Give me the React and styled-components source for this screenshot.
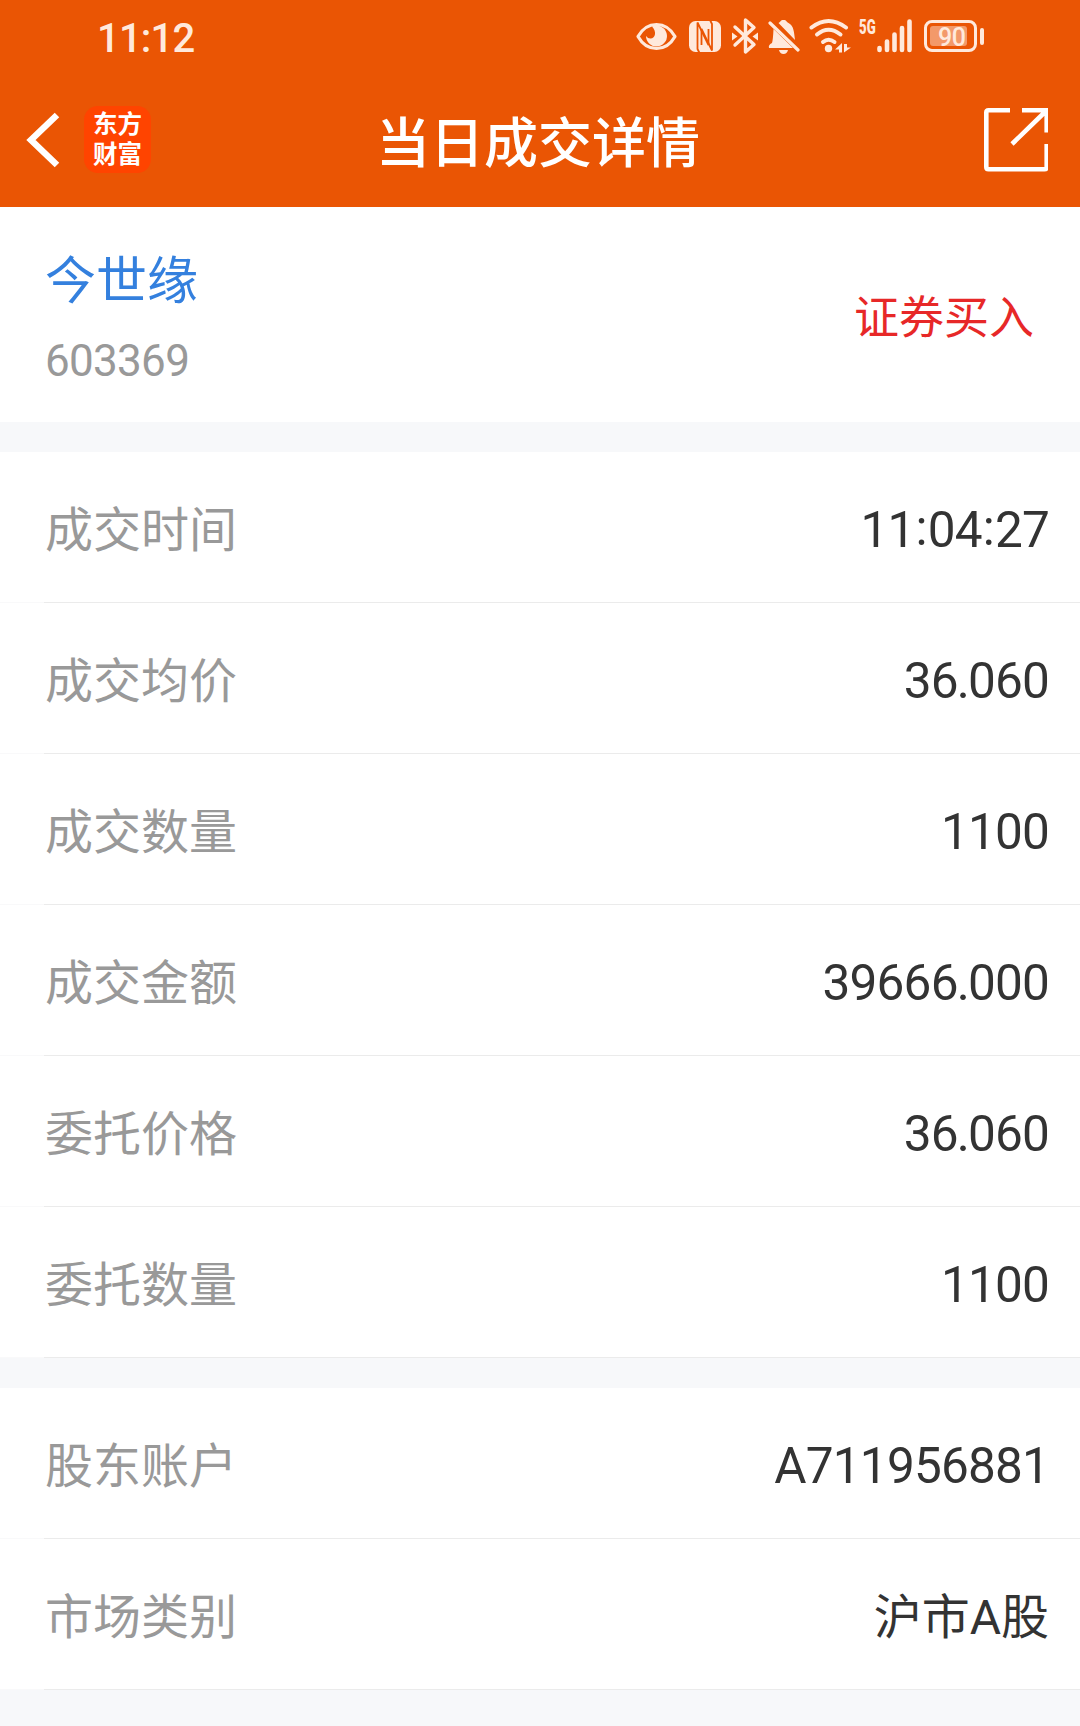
import React from 'react';
import styled, { createGlobalStyle } from 'styled-components';

const GlobalStyle = createGlobalStyle`
	body {
		margin: 0;
		background-color: #f7f8fa;
		font-family: "Noto Sans CJK SC", "Noto Sans", sans-serif;
	}
`;

const Page = styled.div`
	width: 1080px;
	min-height: 1726px;
	background-color: #f7f8fa;
	overflow: hidden;
`;

const Header = styled.header`
	height: 207px;
	background-color: #ea5504;
	color: #fff;
`;

const StatusBar = styled.div`
	display: flex;
	justify-content: space-between;
	height: 72px;
	padding: 0 96px 0 97px;
	color: #ffe9dc;
`;

const Clock = styled.span`
	padding-top: 3px;
	font: 500 40px/72px Roboto, sans-serif;
	letter-spacing: -0.8px;
`;

const StatusIcons = styled.div`
	display: flex;
	align-items: center;
`;

const Glyph = styled.svg`
	display: block;
	flex: none;
	width: ${props => props.$w}px;
	height: ${props => props.$h || 40}px;
	margin-left: ${props => props.$gap || 0}px;
	fill: ${props => props.$line ? 'none' : 'currentColor'};
	stroke: ${props => props.$line ? 'currentColor' : 'none'};
`;

const Network = styled.span`
	align-self: flex-start;
	width: 17px;
	margin: 17px 0 0 8px;
	font: 900 20px/20px Roboto, sans-serif;
	transform: scaleX(0.66);
	transform-origin: left;
`;

const Battery = styled.div`
	display: flex;
	align-items: center;
	margin-left: 12px;

	&::after {
		content: '';
		width: 4px;
		height: 17px;
		margin-left: 3px;
		border-radius: 2px;
		background-color: currentColor;
	}
`;

const BatteryBody = styled.div`
	box-sizing: border-box;
	width: 53px;
	height: 32px;
	padding: 3px;
	border: 3px solid currentColor;
	border-radius: 8px;
`;

const BatteryLevel = styled.div`
	width: 37px;
	height: 20px;
	border-radius: 3px;
	background-color: #f3996a;
	font: 500 25px/23px Roboto, sans-serif;
	text-indent: 8px;
	letter-spacing: -0.5px;
`;

const NavBar = styled.div`
	display: grid;
	grid-template-columns: 1fr auto 1fr;
	align-items: center;
	height: 135px;
	padding: 0 32px 0 25px;
`;

const NavLeft = styled.div`
	display: flex;
	align-items: center;
`;

const NavRight = styled.div`
	display: flex;
	justify-content: flex-end;
`;

const Logo = styled.div`
	display: flex;
	flex-direction: column;
	justify-content: center;
	width: 67px;
	height: 67px;
	margin-left: 24px;
	border-radius: 14px;
	background-color: #ff4400;
	font-family: Roboto, "Noto Sans CJK SC", sans-serif;
	font-size: 24.5px;
	font-weight: 700;
	line-height: 29.5px;
	text-align: center;
`;

const Title = styled.h1`
	margin: 0 0 0 3px;
	font-size: 54px;
	font-weight: 500;
	line-height: 80px;
`;

const Summary = styled.section`
	display: flex;
	justify-content: space-between;
	align-items: center;
	box-sizing: border-box;
	height: 215px;
	padding: 0 46px 0 45px;
	background-color: #fff;
`;

const Stock = styled.div`
	padding-top: 9px;
`;

const StockName = styled.div`
	font-size: 51px;
	line-height: 76px;
	color: #3480de;
`;

const StockCode = styled.div`
	margin-top: 8px;
	font: 400 44px/76px Roboto, sans-serif;
	letter-spacing: -0.7px;
	color: #999;
`;

const Side = styled.div`
	padding-top: 1px;
	font-size: 45px;
	line-height: 68px;
	color: #e72828;
`;

const Group = styled.section`
	margin-top: 30px;
	background-color: #fff;
`;

const Row = styled.div`
	display: flex;
	justify-content: space-between;
	align-items: center;
	box-sizing: border-box;
	height: 151px;
	padding: 0 31px 0 45px;
	border-bottom: 1px solid;
	border-image: linear-gradient(to right, #f9f9fa 45px, #ebebeb 45px) 1;
`;

const Label = styled.span`
	padding-bottom: 2px;
	font-size: 48px;
	line-height: 72px;
	color: #999;
`;

const Value = styled.span`
	padding-top: ${props => props.$cjk ? 8 : 6}px;
	font-family: Roboto, "Noto Sans CJK SC", sans-serif;
	font-size: ${props => props.$cjk ? 48 : 49.5}px;
	line-height: 72px;
	letter-spacing: ${props => props.$cjk ? 0 : -0.8}px;
	color: #333;
`;

const Dot = styled.span`
	margin: 0 -1px;
`;

const Colon = styled.span`
	position: relative;
	top: -2px;
	margin: 0 1px;
`;

const trade = [
	['成交时间', '11:04:27'],
	['成交均价', '36.060'],
	['成交数量', '1100'],
	['成交金额', '39666.000'],
	['委托价格', '36.060'],
	['委托数量', '1100']
];

const account = [
	['股东账户', 'A711956881'],
	['市场类别', '沪市A股']
];

// punctuation gets its own spacing next to the digits
const spaced = text => text.split(/([:.])/).map((part, i) => {
	if (part === ':') return <Colon key={i}>:</Colon>;
	if (part === '.') return <Dot key={i}>.</Dot>;
	return part;
});

const Rows = ({ items }) => (
	<Group>
		{items.map(([label, value]) => (
			<Row key={label}>
				<Label>{label}</Label>
				<Value $cjk={value.includes('股')}>{spaced(value)}</Value>
			</Row>
		))}
	</Group>
);

const EyeIcon = () => (
	<Glyph $w={41} viewBox="0 0 41 40">
		<path d="M2 20.5C11 4.500 30 4.500 39 20.500C30 36.500 11 36.500 2 20.500Z" fill="none" stroke="currentColor" strokeWidth="3.200" strokeLinejoin="round" />
		<path d="M16 10.500A10.500 10.500 0 1 1 10 20Q12 22.600 14.500 22.500C19.500 22.300 21 15.500 16 10.500Z" />
	</Glyph>
);

const NfcIcon = () => (
	<Glyph $w={32} $gap={12} viewBox="0 0 32 40">
		<rect y="5" width="32" height="31" rx="6.500" />
		<g fill="none" stroke="#ea5504" strokeWidth="1.800">
			<path d="M10.500 37L8.500 33V6.500L19.500 29V13" />
			<path d="M21 4L23 8V34.500L12.500 13V29" />
		</g>
	</Glyph>
);

const BluetoothIcon = () => (
	<Glyph $w={26} $gap={11} viewBox="0 0 26 40">
		<path d="M3 11L22 28.500L13.500 36V4L22 11.500L3 29" fill="none" stroke="currentColor" strokeWidth="3.400" strokeLinejoin="round" strokeLinecap="round" />
		<path d="M0 16.500L5.500 20.500L0 24.500ZM26 16.500L20.500 20.500L26 24.500Z" />
	</Glyph>
);

const MutedBellIcon = () => (
	<Glyph $w={33} $gap={10} viewBox="0 0 33 40">
		<path d="M5.500 13L25 32H1Q0 29 4 27Q5 24 5.500 13Z" />
		<path d="M10.500 7C13 6 12 4 15.500 4C19 4 18 6 20.500 7C26 10 26 16 27 24Z" />
		<path d="M2 7L30 34" stroke="currentColor" strokeWidth="3.200" strokeLinecap="round" />
		<path d="M11 34H20Q19 38 15.500 38Q12 38 11 34Z" />
	</Glyph>
);

const WifiIcon = () => (
	<Glyph $w={42} $gap={8} viewBox="0 0 42 40">
		<g fill="none" stroke="currentColor" strokeWidth="4" strokeLinecap="round">
			<path d="M2.500 11.500Q19.500 -1.500 37 11.500" />
			<path d="M8 18.500Q19.500 9 31.500 18.500" />
			<path d="M14 26Q19.500 21.500 25.500 26" />
		</g>
		<circle cx="19.500" cy="32.500" r="3.700" />
		<path d="M33 27V36.500H30V33.500H26ZM35 36.500V28H38V31.500H42Z" />
	</Glyph>
);

const SignalIcon = () => (
	<Glyph $w={35} $gap={1} $line viewBox="0 0 35 40" strokeWidth="4.600" strokeLinecap="round">
		<path d="M2.500 32V34M10 25.500V34M17.500 18.500V34M25 12V34M32.500 5.500V34" />
	</Glyph>
);

const App = () => (
	<Page>
		<GlobalStyle />
		<Header>
			<StatusBar>
				<Clock>11:12</Clock>
				<StatusIcons>
					<EyeIcon />
					<NfcIcon />
					<BluetoothIcon />
					<MutedBellIcon />
					<WifiIcon />
					<Network>5G</Network>
					<SignalIcon />
					<Battery>
						<BatteryBody>
							<BatteryLevel>90</BatteryLevel>
						</BatteryBody>
					</Battery>
				</StatusIcons>
			</StatusBar>
			<NavBar>
				<NavLeft>
					<Glyph $w={35} $h={56} $line viewBox="0 0 35 56" strokeWidth="6.500">
						<path d="M32 3L6 28L32 53" />
					</Glyph>
					<Logo>
						<span>东方</span>
						<span>财富</span>
					</Logo>
				</NavLeft>
				<Title>当日成交详情</Title>
				<NavRight>
					<Glyph $w={64} $h={64} $line viewBox="0 0 64 64" strokeWidth="4.600">
						<path d="M26 2.300H4.500Q2.300 2.300 2.300 4.500V59Q2.300 61.200 4.500 61.200H60.500Q62.700 61.200 62.700 59V36" />
						<path d="M38 2.300H62.700V24.500M61.500 3.500L28 36" />
					</Glyph>
				</NavRight>
			</NavBar>
		</Header>
		<Summary>
			<Stock>
				<StockName>今世缘</StockName>
				<StockCode>603369</StockCode>
			</Stock>
			<Side>证券买入</Side>
		</Summary>
		<Rows items={trade} />
		<Rows items={account} />
	</Page>
);

export default App;
